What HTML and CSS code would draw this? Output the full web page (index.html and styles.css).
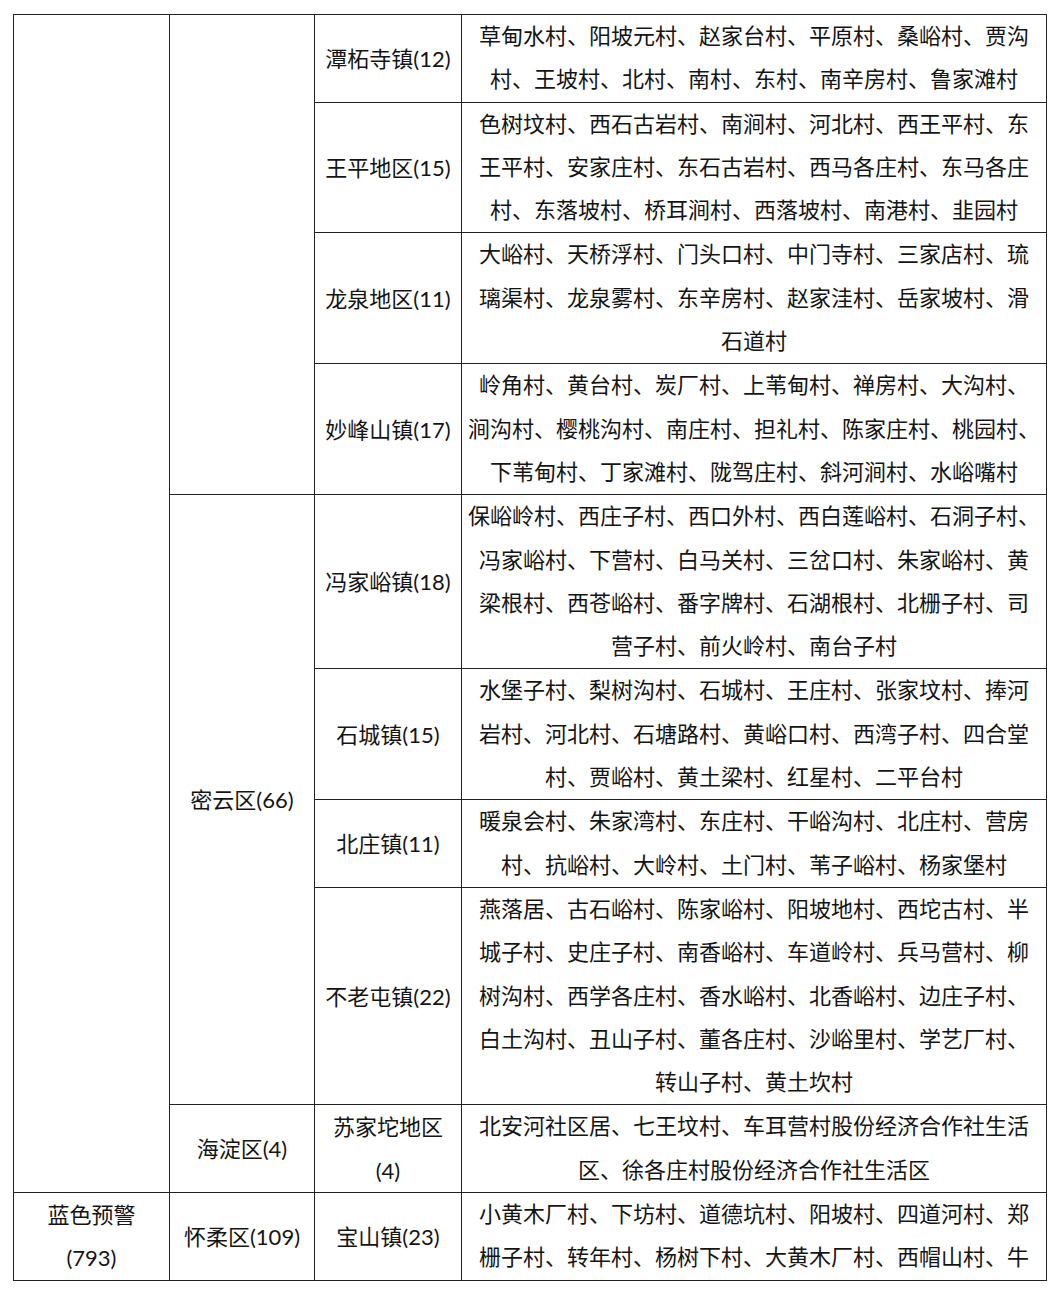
FILE: index.html
```html
<!DOCTYPE html>
<html lang="zh-CN">
<head>
<meta charset="utf-8">
<title>预警村庄列表</title>
<link rel="stylesheet" href="styles.css">
</head>
<body>
<div class="page">
  <div class="sheet">
    <div class="cell label rows9"></div>
    <div class="cell label rows4"></div>

    <div class="cell label">潭柘寺镇(12)</div>
    <div class="cell list">草甸水村、阳坡元村、赵家台村、平原村、桑峪村、贾沟<br>村、王坡村、北村、南村、东村、南辛房村、鲁家滩村</div>

    <div class="cell label">王平地区(15)</div>
    <div class="cell list">色树坟村、西石古岩村、南涧村、河北村、西王平村、东<br>王平村、安家庄村、东石古岩村、西马各庄村、东马各庄<br>村、东落坡村、桥耳涧村、西落坡村、南港村、韭园村</div>

    <div class="cell label">龙泉地区(11)</div>
    <div class="cell list">大峪村、天桥浮村、门头口村、中门寺村、三家店村、琉<br>璃渠村、龙泉雾村、东辛房村、赵家洼村、岳家坡村、滑<br>石道村</div>

    <div class="cell label">妙峰山镇(17)</div>
    <div class="cell list">岭角村、黄台村、炭厂村、上苇甸村、禅房村、大沟村、<br>涧沟村、樱桃沟村、南庄村、担礼村、陈家庄村、桃园村、<br>下苇甸村、丁家滩村、陇驾庄村、斜河涧村、水峪嘴村</div>

    <div class="cell label rows4">密云区(66)</div>
    <div class="cell label">冯家峪镇(18)</div>
    <div class="cell list">保峪岭村、西庄子村、西口外村、西白莲峪村、石洞子村、<br>冯家峪村、下营村、白马关村、三岔口村、朱家峪村、黄<br>梁根村、西苍峪村、番字牌村、石湖根村、北栅子村、司<br>营子村、前火岭村、南台子村</div>

    <div class="cell label">石城镇(15)</div>
    <div class="cell list">水堡子村、梨树沟村、石城村、王庄村、张家坟村、捧河<br>岩村、河北村、石塘路村、黄峪口村、西湾子村、四合堂<br>村、贾峪村、黄土梁村、红星村、二平台村</div>

    <div class="cell label">北庄镇(11)</div>
    <div class="cell list">暖泉会村、朱家湾村、东庄村、干峪沟村、北庄村、营房<br>村、抗峪村、大岭村、土门村、苇子峪村、杨家堡村</div>

    <div class="cell label">不老屯镇(22)</div>
    <div class="cell list">燕落居、古石峪村、陈家峪村、阳坡地村、西坨古村、半<br>城子村、史庄子村、南香峪村、车道岭村、兵马营村、柳<br>树沟村、西学各庄村、香水峪村、北香峪村、边庄子村、<br>白土沟村、丑山子村、董各庄村、沙峪里村、学艺厂村、<br>转山子村、黄土坎村</div>

    <div class="cell label">海淀区(4)</div>
    <div class="cell label">苏家坨地区<br>(4)</div>
    <div class="cell list">北安河社区居、七王坟村、车耳营村股份经济合作社生活<br>区、徐各庄村股份经济合作社生活区</div>

    <div class="cell label">蓝色预警<br>(793)</div>
    <div class="cell label">怀柔区(109)</div>
    <div class="cell label">宝山镇(23)</div>
    <div class="cell list">小黄木厂村、下坊村、道德坑村、阳坡村、四道河村、郑<br>栅子村、转年村、杨树下村、大黄木厂村、西帽山村、牛</div>
  </div>
</div>
</body>
</html>
```

FILE: styles.css
```css
html, body {
  margin: 0;
  padding: 0;
  background: #ffffff;
}

.page {
  padding: 14px 0 0 13px;
}

.sheet {
  display: grid;
  grid-template-columns: 156px 145px 147px 585px;
  grid-auto-rows: auto;
  width: 1034px;
  box-sizing: border-box;
  border-top: 1px solid #222;
  border-left: 1px solid #222;
}

.cell {
  box-sizing: border-box;
  border-right: 1px solid #222;
  border-bottom: 1px solid #222;
  display: flex;
  align-items: center;
  justify-content: center;
  text-align: center;
  font-size: 22px;
  line-height: 43.3px;
  color: #141414;
  white-space: nowrap;
}

.label {
  font-family: "Lato", "Noto Sans CJK SC", sans-serif;
}

.list {
  font-family: "Liberation Serif", "Noto Sans CJK SC", serif;
}

.rows9 {
  grid-row: span 9;
}

.rows4 {
  grid-row: span 4;
}
```
